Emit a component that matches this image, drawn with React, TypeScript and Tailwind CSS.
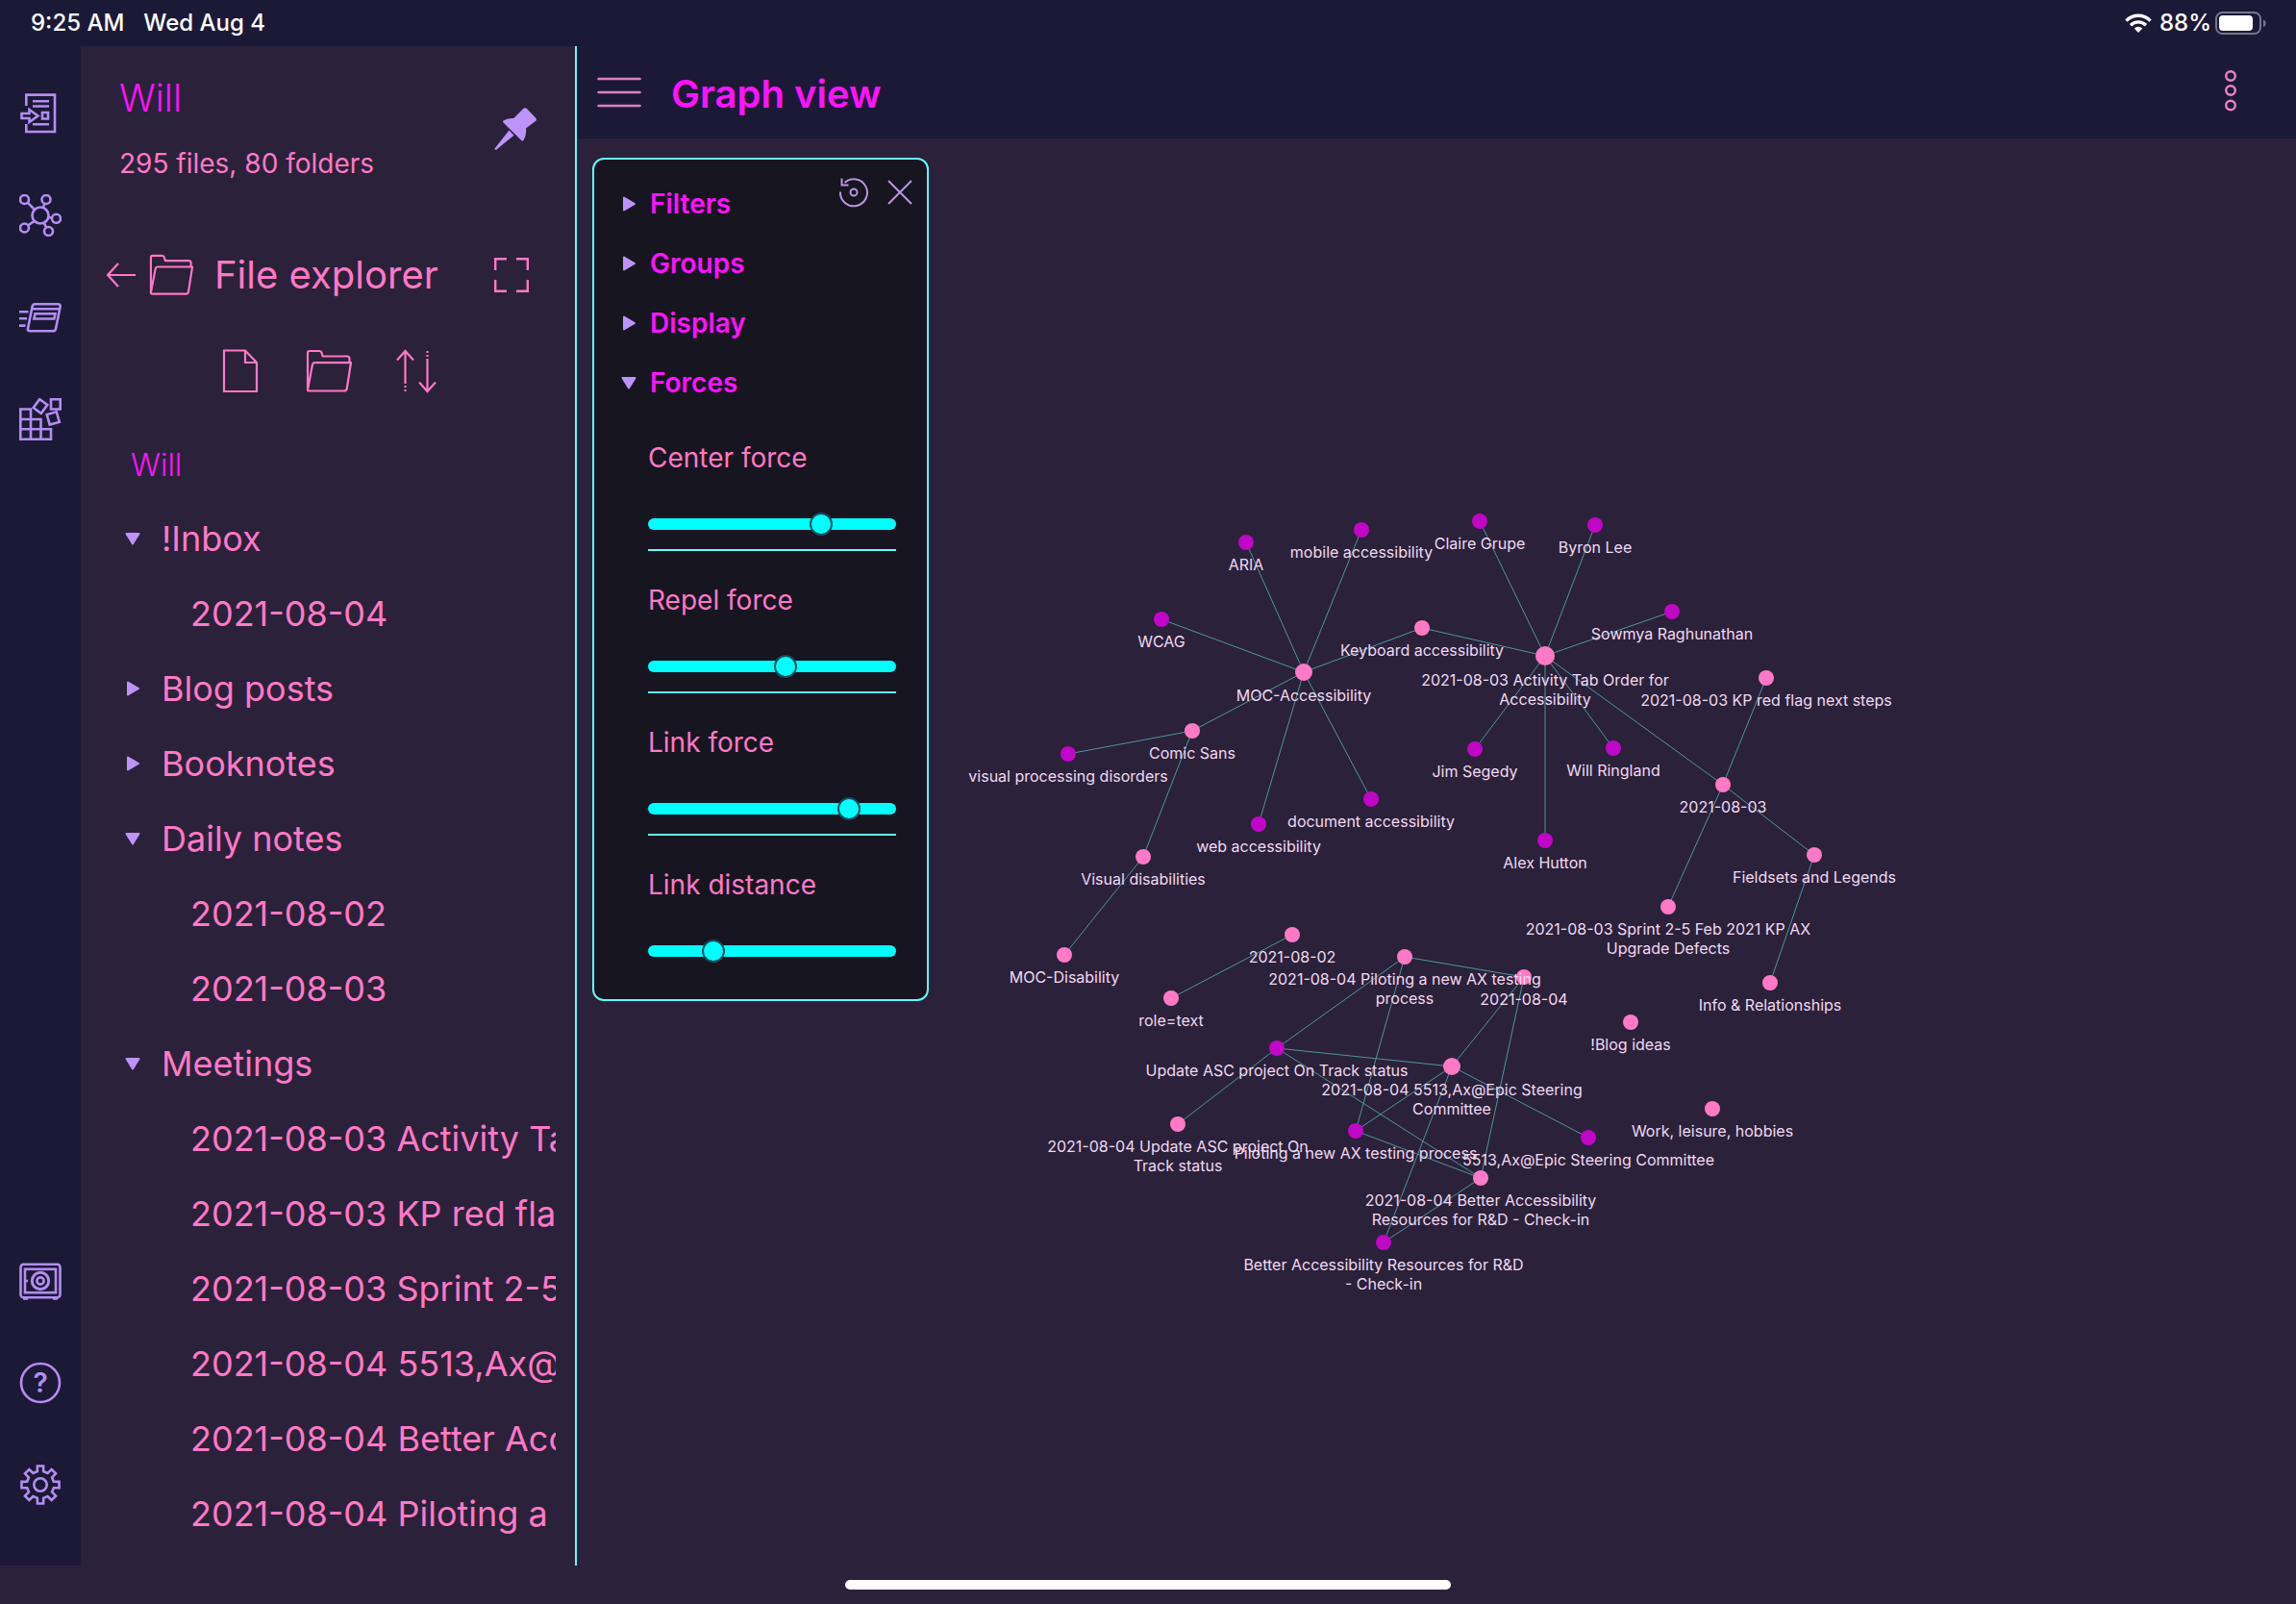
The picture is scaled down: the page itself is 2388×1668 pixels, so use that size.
import type { ReactNode } from "react";

type GraphNode = {
  x: number;
  y: number;
  label: string[];
  r?: number;
  unresolved?: boolean;
};

const NODES: Record<string, GraphNode> = {
  aria: { x: 696, y: 420, label: ["ARIA"], unresolved: true },
  mobile: { x: 816, y: 407, label: ["mobile accessibility"], unresolved: true },
  wcag: { x: 608, y: 500, label: ["WCAG"], unresolved: true },
  mocAccess: { x: 756, y: 555, label: ["MOC-Accessibility"], r: 9 },
  keyboard: { x: 879, y: 509, label: ["Keyboard accessibility"] },
  comic: { x: 640, y: 616, label: ["Comic Sans"] },
  visualProc: { x: 511, y: 640, label: ["visual processing disorders"], unresolved: true },
  web: { x: 709, y: 713, label: ["web accessibility"], unresolved: true },
  document: { x: 826, y: 687, label: ["document accessibility"], unresolved: true },
  visualDis: { x: 589, y: 747, label: ["Visual disabilities"] },
  mocDis: { x: 507, y: 849, label: ["MOC-Disability"] },
  claire: { x: 939, y: 398, label: ["Claire Grupe"], unresolved: true },
  byron: { x: 1059, y: 402, label: ["Byron Lee"], unresolved: true },
  sowmya: { x: 1139, y: 492, label: ["Sowmya Raghunathan"], unresolved: true },
  activity: { x: 1007, y: 538, label: ["2021-08-03 Activity Tab Order for", "Accessibility"], r: 10 },
  redFlag: { x: 1237, y: 561, label: ["2021-08-03 KP red flag next steps"] },
  jim: { x: 934, y: 635, label: ["Jim Segedy"], unresolved: true },
  will: { x: 1078, y: 634, label: ["Will Ringland"], unresolved: true },
  day03: { x: 1192, y: 672, label: ["2021-08-03"] },
  alex: { x: 1007, y: 730, label: ["Alex Hutton"], unresolved: true },
  fieldsets: { x: 1287, y: 745, label: ["Fieldsets and Legends"] },
  sprint: { x: 1135, y: 799, label: ["2021-08-03 Sprint 2-5 Feb 2021 KP AX", "Upgrade Defects"] },
  info: { x: 1241, y: 878, label: ["Info & Relationships"] },
  day02: { x: 744, y: 828, label: ["2021-08-02"] },
  role: { x: 618, y: 894, label: ["role=text"] },
  day04: { x: 985, y: 872, label: ["2021-08-04"] },
  pilotNote: { x: 861, y: 851, label: ["2021-08-04 Piloting a new AX testing", "process"] },
  asc: { x: 728, y: 946, label: ["Update ASC project On Track status"], unresolved: true },
  epicNote: { x: 910, y: 965, label: ["2021-08-04 5513,Ax@Epic Steering", "Committee"], r: 9 },
  ascNote: { x: 625, y: 1025, label: ["2021-08-04 Update ASC project On", "Track status"] },
  pilot: { x: 810, y: 1032, label: ["Piloting a new AX testing process"], unresolved: true },
  epic: { x: 1052, y: 1039, label: ["5513,Ax@Epic Steering Committee"], unresolved: true },
  betterNote: { x: 940, y: 1081, label: ["2021-08-04 Better Accessibility", "Resources for R&D - Check-in"] },
  better: { x: 839, y: 1148, label: ["Better Accessibility Resources for R&D", "- Check-in"], unresolved: true },
  blog: { x: 1096, y: 919, label: ["!Blog ideas"] },
  work: { x: 1181, y: 1009, label: ["Work, leisure, hobbies"] },
};

const LINKS = [
  ["aria", "mocAccess"],
  ["mobile", "mocAccess"],
  ["wcag", "mocAccess"],
  ["keyboard", "mocAccess"],
  ["comic", "mocAccess"],
  ["web", "mocAccess"],
  ["document", "mocAccess"],
  ["comic", "visualProc"],
  ["comic", "visualDis"],
  ["visualDis", "mocDis"],
  ["keyboard", "activity"],
  ["claire", "activity"],
  ["byron", "activity"],
  ["sowmya", "activity"],
  ["jim", "activity"],
  ["will", "activity"],
  ["alex", "activity"],
  ["day03", "activity"],
  ["day03", "redFlag"],
  ["day03", "fieldsets"],
  ["day03", "sprint"],
  ["fieldsets", "info"],
  ["day02", "role"],
  ["pilotNote", "day04"],
  ["pilotNote", "asc"],
  ["pilotNote", "pilot"],
  ["day04", "epicNote"],
  ["day04", "betterNote"],
  ["asc", "epicNote"],
  ["asc", "ascNote"],
  ["asc", "betterNote"],
  ["epicNote", "pilot"],
  ["epicNote", "epic"],
  ["epicNote", "better"],
  ["pilot", "betterNote"],
  ["betterNote", "better"],
];

const TREE = [
  { name: "!Inbox", open: true, files: ["2021-08-04"] },
  { name: "Blog posts", open: false, files: [] },
  { name: "Booknotes", open: false, files: [] },
  { name: "Daily notes", open: true, files: ["2021-08-02", "2021-08-03"] },
  {
    name: "Meetings",
    open: true,
    files: [
      "2021-08-03 Activity Tab Order for Accessibility",
      "2021-08-03 KP red flag next steps",
      "2021-08-03 Sprint 2-5 Feb 2021 KP AX Upgrade Defects",
      "2021-08-04 5513,Ax@Epic Steering Committee",
      "2021-08-04 Better Accessibility Resources for R&D - Check-in",
      "2021-08-04 Piloting a new AX testing process",
    ],
  },
];

const SECTIONS = [
  { name: "Filters", open: false },
  { name: "Groups", open: false },
  { name: "Display", open: false },
  { name: "Forces", open: true },
];

const FORCES = [
  { id: "center", name: "Center force", value: 72 },
  { id: "repel", name: "Repel force", value: 56 },
  { id: "link", name: "Link force", value: 84 },
  { id: "distance", name: "Link distance", value: 24 },
];

export default function App() {
  return (
    <div className="flex h-screen flex-col overflow-hidden bg-[#2b213a] font-['Inter',sans-serif]">
      <StatusBar />
      <div className="flex min-h-0 flex-1">
        <Ribbon />
        <Sidebar />
        <main className="flex min-w-0 flex-1 flex-col">
          <ViewHeader />
          <div className="relative min-h-0 flex-1">
            <Graph />
            <Controls />
          </div>
        </main>
      </div>
      <div className="flex h-10 items-center justify-center">
        <div className="h-[10px] w-[630px] rounded-full bg-white" />
      </div>
    </div>
  );
}

function StatusBar() {
  return (
    <div className="flex h-12 items-center justify-between bg-[#1c1937] pr-[30px] pl-8 text-2xl font-medium text-white">
      <div className="flex gap-5">
        <span>9:25 AM</span>
        <span>Wed Aug 4</span>
      </div>
      <div className="flex items-center">
        <svg width="28" height="20" viewBox="0 0 28 20" fill="none" stroke="currentColor" strokeWidth="3.4">
          <path d="M1.4 7.6a17.6 17.6 0 0 1 25.2 0" />
          <path d="M6 12.2a11.2 11.2 0 0 1 16 0" />
          <path d="M14 20l-4.3-4.4a6 6 0 0 1 8.6 0z" fill="currentColor" stroke="none" />
        </svg>
        <span className="ml-2">88%</span>
        <svg className="ml-1" width="54" height="24" viewBox="0 0 54 24">
          <rect x="1" y="1" width="46" height="22" rx="6.5" fill="none" stroke="#77758a" strokeWidth="2" />
          <rect x="4" y="4" width="35" height="16" rx="4" fill="#fff" />
          <path d="M50 8.5v7.5c3.5-1 3.5-6.5 0-7.5z" fill="#77758a" />
        </svg>
      </div>
    </div>
  );
}

function Ribbon() {
  return (
    <nav className="flex w-21 shrink-0 flex-col items-center justify-between bg-[#1c1937] pt-12 pb-[62px] text-[#b28ef0]">
      <div className="flex flex-col gap-[62px]">
        <RibbonButton label="Open quick switcher">
          <path d="M7.3 14V2.6H37V41H7.3V33" />
          <path d="M2.5 22h8v-4l9 6.5-9 6.5v-4h-8zM14 9.3h17M14 14.5h17M14 33.3h17" />
          <path d="M24 21h6v6.5h-6z" />
        </RibbonButton>
        <RibbonButton label="Open graph view">
          <circle cx="22" cy="22" r="8.5" />
          <circle cx="5.5" cy="5.5" r="4.5" />
          <circle cx="28" cy="5.5" r="4.5" />
          <circle cx="38.5" cy="25.3" r="4.5" />
          <circle cx="30.5" cy="38.5" r="4.5" />
          <circle cx="5.5" cy="35" r="4.5" />
          <path d="M8.7 8.7l7.3 7.3M26.5 9.6l-1.6 4.3M30.5 24l3.6.5M25.8 29.8l2.4 4.8M15.7 27.9l-6.7 4.6" />
        </RibbonButton>
        <RibbonButton label="Open card">
          <path d="M16.5 8.3h24q2.6 0 2.1 2.6l-4.6 23q-.5 2.4-2.9 2.4h-24q-2.6 0-2.1-2.6l4.6-23q.5-2.4 2.9-2.4zM12.5 13.3h29.5" />
          <path d="M16.5 18.3h21l-1.2 5.2h-21z" />
          <path d="M0 16.3h9.5M0 23.3h8M0 30.6h6.5" />
        </RibbonButton>
        <RibbonButton label="Plugins">
          <path d="M1.3 42.7V11.5H12v31.2zM1.3 22H22.5v20.7M1.3 32.3H33v10.4H1.3z" />
          <path d="M33 1.3h9.7v10.2H33z" />
          <rect x="17" y="3" width="10" height="11" transform="rotate(36 22 8.5)" />
          <rect x="30" y="15.5" width="10.5" height="11" transform="rotate(-16 35.2 21)" />
        </RibbonButton>
      </div>
      <div className="flex flex-col gap-[62px]">
        <RibbonButton label="Open another vault">
          <rect x="1.5" y="4.8" width="41" height="34.4" rx="3" />
          <rect x="6" y="9.8" width="32" height="24.4" />
          <circle cx="22" cy="22" r="8.7" strokeWidth="3" />
          <circle cx="22" cy="22" r="3.6" />
          <path d="M4 40.5h5M35 40.5h5M6 22h3" />
        </RibbonButton>
        <RibbonButton label="Help">
          <circle cx="22" cy="22" r="20" />
          <text x="22" y="32" textAnchor="middle" fontSize="28" fontWeight="600" fill="currentColor" stroke="none">
            ?
          </text>
        </RibbonButton>
        <RibbonButton label="Settings">
          <circle cx="22" cy="22" r="6.7" />
          <path d={gearPath(22, 8, 19.8, 14.2)} />
        </RibbonButton>
      </div>
    </nav>
  );
}

function gearPath(c: number, teeth: number, outer: number, root: number) {
  const points: string[] = [];
  for (let i = 0; i < teeth; i++) {
    const mid = (i * 360) / teeth;
    for (const [offset, radius] of [[-13, root], [-9, outer], [9, outer], [13, root]]) {
      const a = ((mid + offset) * Math.PI) / 180;
      points.push(`${(c + radius * Math.sin(a)).toFixed(2)} ${(c - radius * Math.cos(a)).toFixed(2)}`);
    }
  }
  return `M${points.join("L")}Z`;
}

function RibbonButton({ label, children }: { label: string; children: ReactNode }) {
  return (
    <button type="button" aria-label={label} className="size-11">
      <svg width="44" height="44" viewBox="0 0 44 44" fill="none" stroke="currentColor" strokeWidth="2.6">
        {children}
      </svg>
    </button>
  );
}

function Triangle({ open }: { open: boolean }) {
  return (
    <svg
      width="16"
      height="16"
      viewBox="0 0 16 16"
      className="shrink-0 text-[#bd93f9]"
      fill="currentColor"
      stroke="currentColor"
      strokeWidth="2"
      strokeLinejoin="round"
    >
      {open ? <path d="M1.5 3h13L8 13.5z" /> : <path d="M3 1.5v13L14 8z" />}
    </svg>
  );
}

function FolderIcon({ size }: { size: number }) {
  return (
    <svg width={size} height={size} viewBox="0 0 48 48" fill="none" stroke="currentColor" strokeWidth="2.2" strokeLinejoin="round">
      <path d="M2 43V5q0-2 2-2h10q2 0 2.6 2l1 3.5H43q2.5 0 2.5 2.5v4.5" />
      <path d="M2 43l5-26q.4-1.800 2.2-1.800H47L42.8 42q-.4 2.5-2.8 2.5H3.5Q1.7 44.5 2 43z" />
    </svg>
  );
}

function Sidebar() {
  return (
    <aside className="flex w-[516px] shrink-0 flex-col overflow-hidden border-r-2 border-[#62fbf9] text-[#ff79c6]">
      <div className="flex items-center justify-between pt-[30px] pr-10 pl-10">
        <div>
          <h1 className="text-[39px]/12 font-light text-[#ff14ff]">Will</h1>
          <p className="mt-6 text-[28px]/10">295 files, 80 folders</p>
        </div>
        <button type="button" aria-label="Pin sidebar" className="text-[#bd93f9]">
          <svg width="44" height="44" viewBox="0 0 44 44" fill="currentColor">
            <path d="M30.5.8q1.5-1.3 3.2 0l9.6 10q1.4 1.6-.4 3.2L33 21.5q1 6.5-2.5 12.5-1 1-2 .2L9.5 15.5q-1-1.2.3-2.2 5-2.5 10.5-2.3z" />
            <path d="M15.5 23.5l5 5.2L2.5 43.5q-1.6 1-2.2-.8z" />
          </svg>
        </button>
      </div>

      <div className="mt-[72px] flex h-12 items-center pr-12 pl-[26px]">
        <svg width="32" height="28" viewBox="0 0 32 28" fill="none" stroke="currentColor" strokeWidth="2.2">
          <path d="M31 14H2M13 2L2 14l11 12" />
        </svg>
        <div className="ml-[13px]">
          <FolderIcon size={46} />
        </div>
        <h2 className="ml-[22px] flex-1 text-[40px]/12">File explorer</h2>
        <button type="button" aria-label="Expand">
          <svg width="36" height="36" viewBox="0 0 36 36" fill="none" stroke="currentColor" strokeWidth="2.4">
            <path d="M1.2 13V1.2H13M23 1.2h11.8V13M34.8 23v11.8H23M13 34.8H1.2V23" />
          </svg>
        </button>
      </div>

      <div className="mt-[52px] flex h-12 items-center gap-[46px] pl-[144px]">
        <button type="button" aria-label="New note">
          <svg width="44" height="46" viewBox="0 0 44 46" fill="none" stroke="currentColor" strokeWidth="2.2">
            <path d="M5 1.5h22L39 14v30H5zM27 1.5V14h12" />
          </svg>
        </button>
        <button type="button" aria-label="New folder">
          <FolderIcon size={48} />
        </button>
        <button type="button" aria-label="Change sort order">
          <svg width="42" height="46" viewBox="0 0 42 46" fill="none" stroke="currentColor" strokeWidth="2.2">
            <path d="M9.5 36V2M1 11.5L9.5 2l8.5 9.5M32.5 10v34M24 34.5l8.5 9.5 8.5-9.5" />
            <path d="M9.5 38v6M32.5 2v6" strokeDasharray="2 2" />
          </svg>
        </button>
      </div>

      <div className="mt-[54px] mr-5 overflow-hidden">
        <h3 className="pl-[52px] text-[32px]/10 font-light text-[#ff14ff]">Will</h3>
        <ul className="mt-[17px] text-4xl whitespace-nowrap">
          {TREE.map((folder) => (
            <li key={folder.name}>
              <button type="button" aria-expanded={folder.open} className="flex h-[78px] w-full items-center gap-[22px] pl-[46px]">
                <Triangle open={folder.open} />
                {folder.name}
              </button>
              <ul>
                {folder.files.map((file) => (
                  <li key={file}>
                    <a href="#" className="flex h-[78px] items-center pl-[114px]">
                      {file}
                    </a>
                  </li>
                ))}
              </ul>
            </li>
          ))}
        </ul>
      </div>
    </aside>
  );
}

function ViewHeader() {
  return (
    <header className="flex h-24 shrink-0 items-center bg-[#1c1937] pr-[58px] pl-[21px] text-[#ff79c6]">
      <button type="button" aria-label="Open menu">
        <svg width="46" height="32" viewBox="0 0 46 32" fill="none" stroke="#d982b8" strokeWidth="2.6" strokeLinecap="round">
          <path d="M1.5 2h43M1.5 16h43M1.5 30h43" />
        </svg>
      </button>
      <h2 className="ml-[31px] flex-1 pt-1 text-[40px]/12 font-semibold text-[#ff14ff]">Graph view</h2>
      <button type="button" aria-label="More options">
        <svg width="20" height="46" viewBox="0 0 20 46" fill="none" stroke="#e884c4" strokeWidth="2.4">
          <circle cx="10" cy="6" r="4.8" />
          <circle cx="10" cy="21" r="4.8" />
          <circle cx="10" cy="36.5" r="4.8" />
        </svg>
      </button>
    </header>
  );
}

function Controls() {
  return (
    <section className="absolute top-5 left-4 w-[350px] rounded-xl border-2 border-[#62fbf9] bg-[#171520] pt-[15px] pb-6">
      <div className="absolute top-[18px] right-3 flex gap-4 text-[#b795e0]">
        <button type="button" aria-label="Restore default settings">
          <svg width="32" height="32" viewBox="0 0 32 32" fill="none" stroke="currentColor" strokeWidth="2">
            <path d="M2 15.5A14 14 0 1 0 6.5 6" />
            <path d="M3.5 1.5v7h7" />
            <circle cx="16" cy="16" r="3.5" />
          </svg>
        </button>
        <button type="button" aria-label="Close">
          <svg width="32" height="32" viewBox="0 0 32 32" fill="none" stroke="currentColor" strokeWidth="2">
            <path d="M4 4l24 24M28 4L4 28" />
          </svg>
        </button>
      </div>

      {SECTIONS.map((section) => (
        <button
          key={section.name}
          type="button"
          aria-expanded={section.open}
          className="flex h-[62px] items-center gap-[14px] pl-[28px] text-[28px]/10 font-semibold text-[#ff14ff]"
        >
          <Triangle open={section.open} />
          {section.name}
        </button>
      ))}

      <div className="pr-8 pl-14">
        {FORCES.map((force) => (
          <div key={force.id} className="border-b-2 border-[#62fbf9] pt-[31px] pb-5 first:pt-[27px] last:border-b-0">
            <label htmlFor={force.id} className="block text-[28px]/10 text-[#ff79c6]">
              {force.name}
            </label>
            <input
              id={force.id}
              type="range"
              min={0}
              max={100}
              defaultValue={force.value}
              className="mt-[43px] block h-3 w-full appearance-none rounded-full bg-[#00ffff] [&::-webkit-slider-thumb]:size-6 [&::-webkit-slider-thumb]:appearance-none [&::-webkit-slider-thumb]:rounded-full [&::-webkit-slider-thumb]:border-2 [&::-webkit-slider-thumb]:border-[#10505c] [&::-webkit-slider-thumb]:bg-[#00ffff]"
            />
          </div>
        ))}
      </div>
    </section>
  );
}

function Graph() {
  const nodes = Object.entries(NODES);

  return (
    <svg className="size-full" viewBox="0 0 1788 1484" role="img" aria-label="Graph of linked notes">
      <g stroke="#4f969c" strokeWidth="1">
        {LINKS.map(([from, to]) => (
          <line key={`${from}-${to}`} x1={NODES[from].x} y1={NODES[from].y} x2={NODES[to].x} y2={NODES[to].y} />
        ))}
      </g>
      {nodes.map(([id, node]) => (
        <circle key={id} cx={node.x} cy={node.y} r={node.r ?? 8} fill={node.unresolved ? "#c006c6" : "#ff79c6"} />
      ))}
      <g fill="#f1d9f2" fontSize="16" textAnchor="middle">
        {nodes.map(([id, node]) =>
          node.label.map((line, i) => (
            <text key={`${id}-${i}`} x={node.x} y={node.y + (node.r ?? 8) + 21 + i * 20}>
              {line}
            </text>
          )),
        )}
      </g>
    </svg>
  );
}
